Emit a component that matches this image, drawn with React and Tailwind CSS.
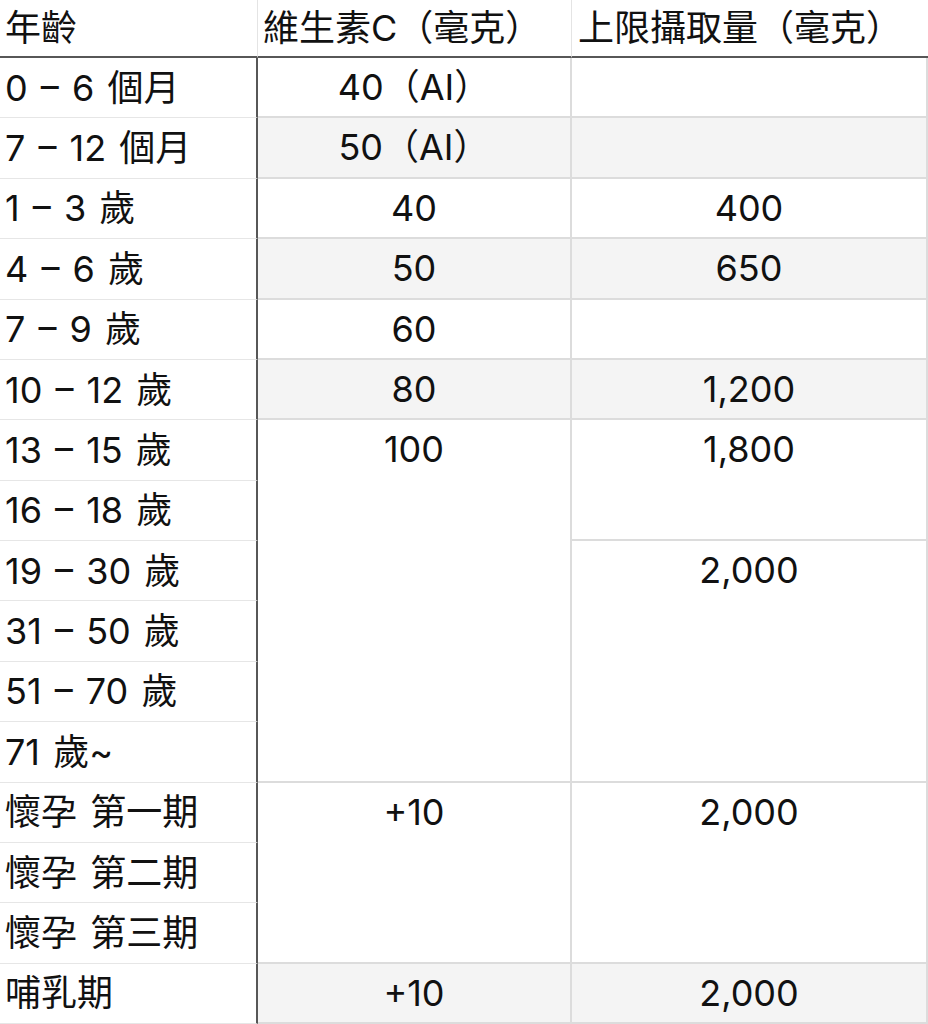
import React from "react";

const rows = [
  { a: "0 – 6 個月", b: "40（AI）", c: "", shade: false },
  { a: "7 – 12 個月", b: "50（AI）", c: "", shade: true },
  { a: "1 – 3 歲", b: "40", c: "400", shade: false },
  { a: "4 – 6 歲", b: "50", c: "650", shade: true },
  { a: "7 – 9 歲", b: "60", c: "", shade: false },
  { a: "10 – 12 歲", b: "80", c: "1,200", shade: true },
  { a: "13 – 15 歲", b: "100", bSpan: "row-span-6", c: "1,800", cSpan: "row-span-2" },
  { a: "16 – 18 歲", b: null, c: null },
  { a: "19 – 30 歲", b: null, c: "2,000", cSpan: "row-span-4" },
  { a: "31 – 50 歲", b: null, c: null },
  { a: "51 – 70 歲", b: null, c: null },
  { a: "71 歲~", b: null, c: null },
  { a: "懷孕 第一期", b: "+10", bSpan: "row-span-3", c: "2,000", cSpan: "row-span-3" },
  { a: "懷孕 第二期", b: null, c: null },
  { a: "懷孕 第三期", b: null, c: null },
  { a: "哺乳期", b: "+10", c: "2,000", shade: true },
];

function Val({ text, span, shade }) {
  return (
    <div
      className={`${span || ""} ${shade ? "bg-[#f4f4f4]" : "bg-white"} border-b-2 border-r-2 border-[#dcdcdc]`}
    >
      <div className="h-[58px] flex items-center justify-center">{text}</div>
    </div>
  );
}

export default function App() {
  const cells = [];
  rows.forEach((r, i) => {
    cells.push(
      <div
        key={`a${i}`}
        className="bg-white border-b border-b-[#e6e6e6] border-r-2 border-r-[#575757] flex items-center pl-[5px] [word-spacing:3px]"
      >
        {r.a}
      </div>
    );
    if (r.b !== null) {
      cells.push(<Val key={`b${i}`} text={r.b} span={r.bSpan} shade={r.shade} />);
    }
    if (r.c !== null) {
      cells.push(<Val key={`c${i}`} text={r.c} span={r.cSpan} shade={r.shade} />);
    }
  });

  return (
    <div
      className="w-[928px] h-[1024px] overflow-hidden bg-white text-[36px] leading-none text-[#111111]"
      style={{ fontFamily: 'Inter, "Noto Sans CJK TC", sans-serif' }}
    >
      <div className="grid grid-cols-[258px_314px_356px] grid-rows-[58px_repeat(16,60.375px)]">
        <div className="border-b-2 border-b-[#575757] border-r border-r-[#e4e4e4] flex items-center pl-[5px]">
          年齡
        </div>
        <div className="border-b-2 border-b-[#575757] border-r border-r-[#e4e4e4] flex items-center pl-[5px]">
          維生素C（毫克）
        </div>
        <div className="border-b-2 border-b-[#575757] flex items-center pl-[6px]">
          上限攝取量（毫克）
        </div>
        {cells}
      </div>
    </div>
  );
}
